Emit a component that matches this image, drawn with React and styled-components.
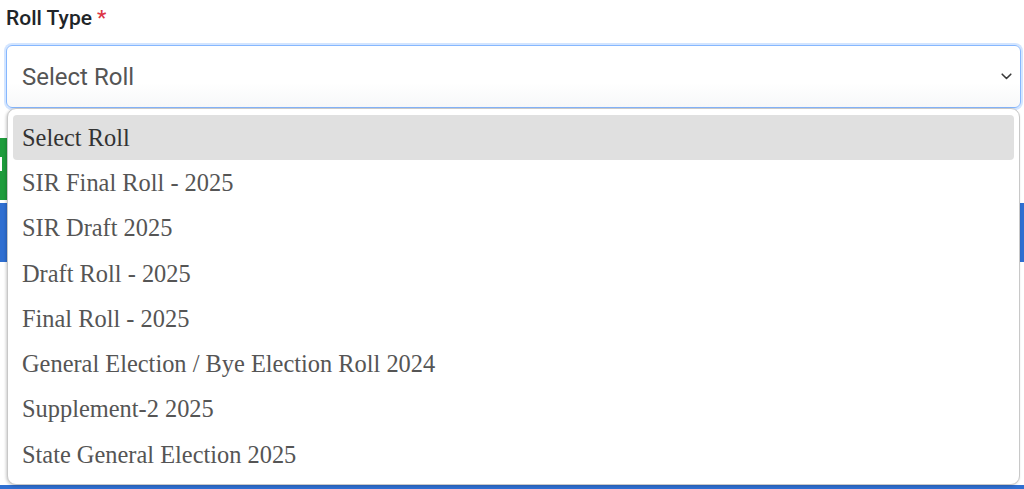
import React from "react";
import styled, { createGlobalStyle } from "styled-components";

const Global = createGlobalStyle`
  body {
    margin: 0;
    background: #fff;
    font-family: Roboto, "Liberation Sans", sans-serif;
  }
`;

const options = [
  "Select Roll",
  "SIR Final Roll - 2025",
  "SIR Draft 2025",
  "Draft Roll - 2025",
  "Final Roll - 2025",
  "General Election / Bye Election Roll 2024",
  "Supplement-2 2025",
  "State General Election 2025",
];

const Page = styled.div`
  width: 1024px;
  height: 489px;
  overflow: hidden;
  display: flex;
  flex-direction: column;
`;

const Field = styled.div`
  position: relative;
  padding: 5px 3px 0 6px;
`;

const Label = styled.label`
  display: block;
  font-size: 21px;
  font-weight: 500;
  color: #212529;
  line-height: 26px;
  margin-bottom: 14px;
  span {
    color: #dc3545;
    margin-left: 5px;
  }
`;

const SelectBox = styled.div`
  height: 63px;
  box-sizing: border-box;
  border: 1px solid #86b7fe;
  border-radius: 6px;
  box-shadow: 0 0 0 2px rgba(13, 110, 253, 0.18);
  background: linear-gradient(#fff 60%, #f7f8f9);
  display: flex;
  align-items: center;
  justify-content: space-between;
  padding: 0 8px 0 15px;
  font-size: 24px;
  color: #555;
`;

const Menu = styled.ul`
  position: absolute;
  left: 7px;
  top: 108px;
  width: 1013px;
  height: 377px;
  box-sizing: border-box;
  margin: 0;
  padding: 6px 5px;
  list-style: none;
  background: #fff;
  border: 1px solid #c8c8c8;
  border-radius: 9px;
  box-shadow: -1px 1px 3px rgba(0, 0, 0, 0.2);
  z-index: 2;
`;

const Item = styled.li`
  height: 45.3px;
  display: flex;
  align-items: center;
  padding-left: 9px;
  border-radius: 4px;
  font-family: "Liberation Serif", "Times New Roman", serif;
  font-size: 24.4px;
  color: ${(p) => (p.$active ? "#333" : "#555")};
  background: ${(p) => (p.$active ? "#e0e0e0" : "transparent")};
`;

const Behind = styled.div`
  flex: 1;
  display: flex;
  flex-direction: column;
  padding-top: 30px;
`;

const GreenButton = styled.div`
  width: 60px;
  height: 62px;
  background: #1e9c3c;
  position: relative;
  &::after {
    content: "";
    position: absolute;
    left: 0;
    top: 19px;
    width: 2px;
    height: 14px;
    background: #fff;
  }
`;

const BlueBar = styled.div`
  margin-top: 3px;
  height: 59px;
  background: #2f6fd1;
`;

const Spacer = styled.div`
  flex: 1;
`;

const BottomBar = styled.div`
  height: 4px;
  background: #2f6fd1;
`;

function Chevron() {
  return (
    <svg width="11" height="7" viewBox="0 0 11 7" fill="none">
      <path d="M1.2 1.2 5.5 5.5l4.3-4.3" stroke="#3a3a3a" strokeWidth="1.6" strokeLinecap="round" strokeLinejoin="round" />
    </svg>
  );
}

export default function App() {
  return (
    <Page>
      <Global />
      <Field>
        <Label>
          Roll Type<span>*</span>
        </Label>
        <SelectBox>
          Select Roll
          <Chevron />
        </SelectBox>
        <Menu>
          {options.map((o, i) => (
            <Item key={o} $active={i === 0}>
              {o}
            </Item>
          ))}
        </Menu>
      </Field>
      <Behind>
        <GreenButton />
        <BlueBar />
        <Spacer />
        <BottomBar />
      </Behind>
    </Page>
  );
}
